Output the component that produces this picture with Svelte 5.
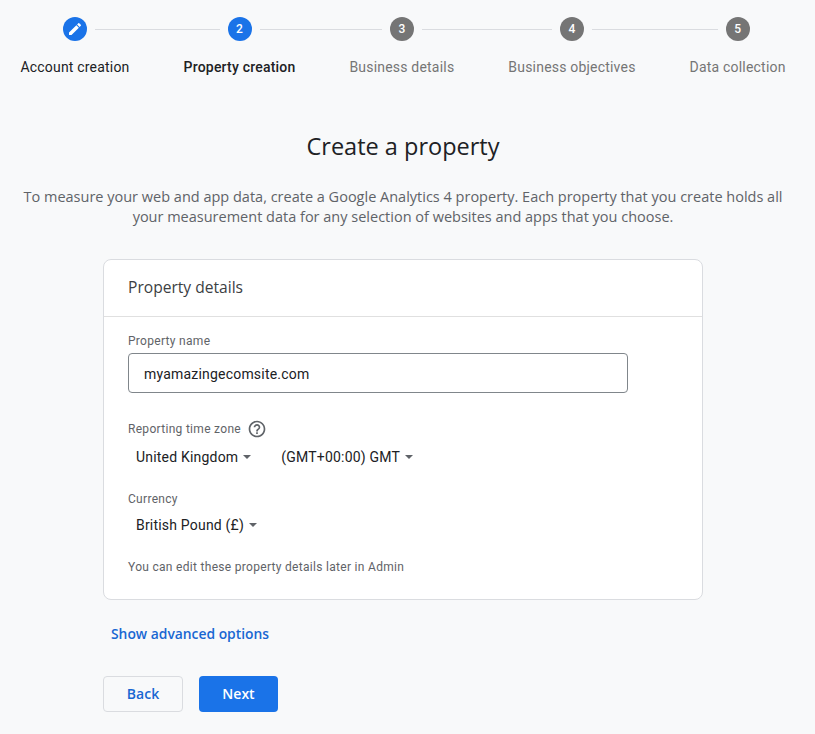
<script>
  const steps = [
    { label: "Account creation", state: "done" },
    { label: "Property creation", state: "active" },
    { label: "Business details", state: "" },
    { label: "Business objectives", state: "" },
    { label: "Data collection", state: "" }
  ];

  let propertyName = "myamazingecomsite.com";
</script>

<main>
  <div class="stepper">
    {#each steps as step, i}
      <div class="step {step.state}">
        <div class="head">
          <span class="line" class:hidden={i == 0}></span>
          <span class="circle">
            {#if step.state == "done"}
              <svg width="16" height="16" viewBox="0 0 24 24" fill="#fff">
                <path d="M3 17.25V21h3.75L17.81 9.94l-3.75-3.75L3 17.25zM20.71 7.04a1 1 0 0 0 0-1.41l-2.34-2.34a1 1 0 0 0-1.41 0l-1.83 1.83 3.75 3.75 1.83-1.83z"/>
              </svg>
            {:else}
              {i + 1}
            {/if}
          </span>
          <span class="line" class:hidden={i == steps.length - 1}></span>
        </div>
        <div class="label">{step.label}</div>
      </div>
    {/each}
  </div>

  <h1>Create a property</h1>
  <p class="intro">
    To measure your web and app data, create a Google Analytics 4 property. Each property that you create holds all
    your measurement data for any selection of websites and apps that you choose.
  </p>

  <section class="card">
    <h2>Property details</h2>
    <div class="body">
      <label class="field-label" for="name">Property name</label>
      <input id="name" bind:value={propertyName} />

      <div class="field-label zone">
        Reporting time zone
        <svg width="20" height="20" viewBox="0 0 24 24" fill="#5f6368">
          <path d="M11 18h2v-2h-2v2zm1-16C6.48 2 2 6.48 2 12s4.48 10 10 10 10-4.48 10-10S17.52 2 12 2zm0 18c-4.41 0-8-3.59-8-8s3.59-8 8-8 8 3.59 8 8-3.59 8-8 8zm0-14c-2.21 0-4 1.79-4 4h2c0-1.1.9-2 2-2s2 .9 2 2c0 2-3 1.75-3 5h2c0-2.25 3-2.5 3-5 0-2.21-1.79-4-4-4z"/>
        </svg>
      </div>
      <div class="selects">
        <button class="select">United Kingdom<span class="caret"></span></button>
        <button class="select">(GMT+00:00) GMT<span class="caret"></span></button>
      </div>

      <div class="field-label currency">Currency</div>
      <div class="selects">
        <button class="select">British Pound (£)<span class="caret"></span></button>
      </div>

      <p class="hint">You can edit these property details later in Admin</p>
    </div>
  </section>

  <div class="bottom">
    <a class="advanced" href="#advanced">Show advanced options</a>
    <div class="actions">
      <button class="btn back">Back</button>
      <button class="btn next">Next</button>
    </div>
  </div>
</main>

<style>
  :global(body) {
    background: #f8f9fa;
    font-family: Roboto, sans-serif;
    color: #202124;
  }

  main {
    width: 806px;
    height: 734px;
    overflow: hidden;
    padding-top: 17px;
    box-sizing: border-box;
  }

  .stepper {
    display: flex;
    justify-content: center;
    gap: 54px;
  }

  .head {
    display: flex;
    align-items: center;
    gap: 8px;
    margin: 0 -27px;
  }

  .line {
    flex: 1;
    height: 1px;
    background: #dadce0;
  }

  .line.hidden {
    visibility: hidden;
  }

  .circle {
    width: 24px;
    height: 24px;
    border-radius: 50%;
    background: #757575;
    color: #fff;
    font-size: 12px;
    font-weight: 500;
    display: flex;
    align-items: center;
    justify-content: center;
  }

  .done .circle,
  .active .circle {
    background: #1a73e8;
  }

  .label {
    margin-top: 16px;
    font-size: 14px;
    line-height: 20px;
    letter-spacing: 0.2px;
    color: #757575;
    white-space: nowrap;
  }

  .done .label {
    color: #202124;
  }

  .active .label {
    color: #202124;
    font-weight: 500;
  }

  h1 {
    margin: 53px 0 0;
    text-align: center;
    font-family: "Open Sans", sans-serif;
    font-size: 23.5px;
    line-height: 32px;
    font-weight: 400;
  }

  .intro {
    margin: 25px auto 0;
    width: 770px;
    text-align: center;
    font-family: "Open Sans", sans-serif;
    font-size: 14.5px;
    font-weight: 500;
    line-height: 20px;
    color: #5f6368;
  }

  .card {
    margin: 32px auto 0;
    width: 600px;
    height: 341px;
    box-sizing: border-box;
    background: #fff;
    border: 1px solid #dadce0;
    border-radius: 8px;
  }

  h2 {
    margin: 0;
    padding: 0 24px 2px;
    height: 54px;
    display: flex;
    align-items: center;
    border-bottom: 1px solid #e0e0e0;
    font-family: "Open Sans", sans-serif;
    font-size: 15.6px;
    font-weight: 400;
    color: #3c4043;
  }

  .body {
    padding: 16px 24px 0;
  }

  .field-label {
    display: block;
    font-size: 12px;
    line-height: 16px;
    letter-spacing: 0.3px;
    color: #5f6368;
  }

  input {
    display: block;
    margin-top: 4px;
    width: 500px;
    height: 40px;
    box-sizing: border-box;
    padding: 2px 15px 0;
    border: 1px solid #80868b;
    border-radius: 4px;
    background: #fff;
    font-family: Roboto, sans-serif;
    font-size: 14px;
    letter-spacing: 0.2px;
    color: #202124;
    outline: 0;
  }

  .zone {
    display: flex;
    align-items: center;
    gap: 6px;
    margin-top: 26px;
    margin-bottom: -1px;
  }

  .currency {
    margin-top: 22px;
    margin-bottom: -1px;
  }

  .selects {
    display: flex;
    gap: 14px;
    margin-top: 7px;
  }

  .select {
    display: flex;
    align-items: center;
    gap: 5px;
    padding: 0 8px;
    height: 24px;
    border: 0;
    background: none;
    font-family: Roboto, sans-serif;
    font-size: 14px;
    letter-spacing: 0.2px;
    color: #202124;
  }

  .caret {
    width: 0;
    height: 0;
    border-left: 4px solid transparent;
    border-right: 4px solid transparent;
    border-top: 4px solid #5f6368;
  }

  .hint {
    margin: 22px 0 0;
    font-size: 12px;
    line-height: 16px;
    letter-spacing: 0.3px;
    color: #5f6368;
  }

  .bottom {
    width: 600px;
    margin: 0 auto;
  }

  .advanced {
    display: block;
    margin: 24px 0 0 8px;
    font-family: "Open Sans", sans-serif;
    font-size: 13.85px;
    line-height: 20px;
    font-weight: 600;
    color: #1967d2;
    text-decoration: none;
  }

  .actions {
    display: flex;
    gap: 16px;
    margin-top: 32px;
  }

  .btn {
    width: 80px;
    height: 36px;
    padding: 0 0 2px;
    border-radius: 4px;
    font-family: "Open Sans", sans-serif;
    font-size: 14px;
    font-weight: 600;
  }

  .back {
    background: transparent;
    border: 1px solid #dadce0;
    color: #1967d2;
  }

  .next {
    width: 79px;
    background: #1a73e8;
    border: 0;
    color: #fff;
  }
</style>
